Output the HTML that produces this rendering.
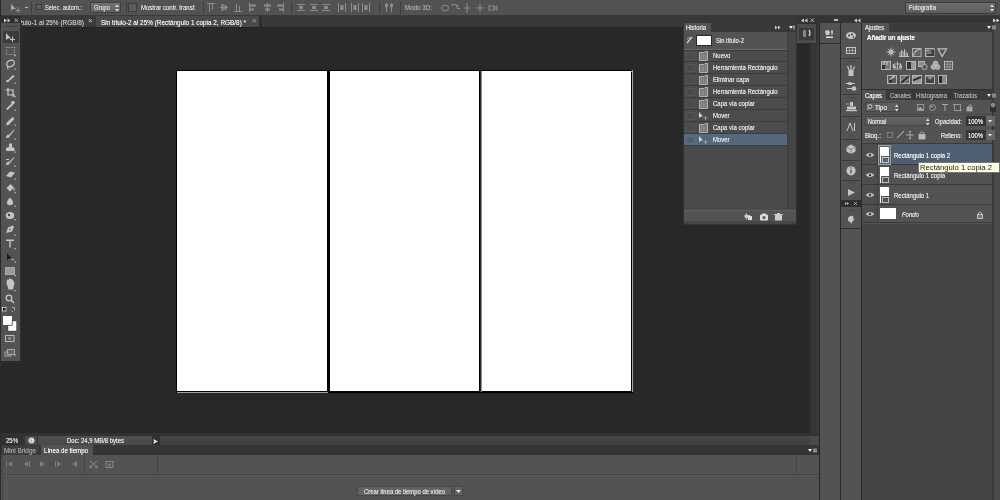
<!DOCTYPE html>
<html><head><meta charset="utf-8">
<style>
*{margin:0;padding:0;box-sizing:border-box}
html,body{width:1000px;height:500px;overflow:hidden;background:#282828;font-family:"Liberation Sans",sans-serif;font-size:6.5px;color:#d8d8d8;position:relative}
.a{position:absolute}
.t{position:absolute;white-space:nowrap;line-height:6.6px;font-size:6.6px;-webkit-font-smoothing:antialiased;filter:grayscale(1);text-shadow:0 0 0.5px currentColor;transform-origin:0 0;transform:scaleX(var(--s,0.9))}
.s{position:absolute;white-space:nowrap;line-height:1;filter:grayscale(1)}
svg{position:absolute;overflow:visible}
</style></head><body>

<!-- ============ OPTIONS BAR ============ -->
<div class="a" style="left:0;top:0;width:1000px;height:16px;background:#525252"></div>
<div class="a" style="left:0;top:15px;width:1000px;height:1px;background:#3a3a3a"></div>
<!-- move tool icon -->
<svg style="left:11px;top:4px" width="10" height="9"><path d="M0 0 L0 7 L2 5 L5 5 Z" fill="#a8a8a8"/><path d="M7 3 V9 M4.5 6.5 H9.5" stroke="#909090" stroke-width="1"/></svg>
<div class="a" style="left:25px;top:7px;width:3px;height:1px;background:#bbb"></div>
<div class="a" style="left:31px;top:2px;width:1px;height:12px;background:#3f3f3f"></div>
<div class="a" style="left:36px;top:4px;width:6px;height:6px;background:#5e5e5e;border:1px solid #3a3a3a"></div>
<div class="t" style="left:45px;top:5px;color:#d8d8d8;--s:0.877">Selec. autom.:</div>
<div class="a" style="left:90px;top:2px;width:31px;height:11px;background:linear-gradient(#727272,#616161);border:1px solid #404040"></div>
<div class="t" style="left:94px;top:5px;color:#d6d6d6;--s:0.874">Grupo</div>
<svg style="left:115px;top:4px" width="4" height="8"><path d="M0 3 L2.0 0.5 L4 3 Z M0 5 L4 5 L2.0 7.5 Z" fill="#ddd"/></svg>
<div class="a" style="left:126px;top:2px;width:1px;height:12px;background:#3f3f3f"></div>
<div class="a" style="left:128px;top:3px;width:9px;height:9px;background:#5c5c5c;border:1px solid #3c3c3c"></div>
<div class="t" style="left:141px;top:5px;color:#d8d8d8;--s:0.909">Mostrar contr. transf.</div>
<div class="a" style="left:203px;top:2px;width:1px;height:12px;background:#3f3f3f"></div>
<!-- align icons -->
<svg style="left:0;top:0" width="520" height="16"><g stroke="#8c8c8c" stroke-width="1" fill="#8c8c8c">
<path d="M207 3.5H215M209.5 4V12M212.5 4V10" fill="none"/>
<path d="M220 7.5H228" fill="none"/><rect x="221.5" y="4" width="2" height="7" stroke="none"/><rect x="224.5" y="5" width="2" height="5" stroke="none"/>
<path d="M234 11.5H242M236.5 4V11M239.5 6V11" fill="none"/>
<path d="M249.5 3V12" fill="none"/><rect x="250" y="4.5" width="6" height="2" stroke="none"/><rect x="250" y="8.5" width="4" height="2" stroke="none"/>
<path d="M267.5 3V12" fill="none"/><rect x="264" y="4.5" width="7" height="2" stroke="none"/><rect x="265" y="8.5" width="5" height="2" stroke="none"/>
<path d="M283.5 3V12" fill="none"/><rect x="277" y="4.5" width="6" height="2" stroke="none"/><rect x="279" y="8.5" width="4" height="2" stroke="none"/>
<path d="M291.5 2V14" stroke="#3e3e3e"/>
<path d="M297 4.5H305M297 10.5H305" fill="none"/><rect x="299" y="6" width="4" height="3" stroke="none"/>
<path d="M310 4.5H318M310 10.5H318" fill="none"/><rect x="312" y="6" width="4" height="3" stroke="none"/>
<path d="M322 4.5H330M322 10.5H330" fill="none"/><rect x="324" y="6" width="4" height="3" stroke="none"/>
<path d="M338.5 3V12M345.5 3V12" fill="none"/><rect x="340.5" y="5" width="3" height="5" stroke="none"/>
<path d="M351.5 3V12M358.5 3V12" fill="none"/><rect x="353.5" y="5" width="3" height="5" stroke="none"/>
<path d="M362.5 3V12M369.5 3V12" fill="none"/><rect x="364.5" y="5" width="3" height="5" stroke="none"/>
<path d="M379.5 2V14" stroke="#3e3e3e"/>
<path d="M386.5 3V12M391.5 3V12" fill="none"/><rect x="385" y="4" width="3" height="3" stroke="none"/><rect x="390" y="4" width="3" height="3" stroke="none"/>
<path d="M400.5 2V14" stroke="#3e3e3e"/>
<g fill="none" stroke="#8c8c8c"><ellipse cx="445" cy="8" rx="3.5" ry="2.8"/><path d="M451 5 Q456 3 459 7 M457 4.5 V8.5 H460" /><path d="M467 3V13 M464 8H470"/><path d="M476 8H484 M480 4V12"/><rect x="489" y="6" width="5" height="4"/><path d="M494 7.5 L497 6 V10 L494 8.5"/></g>
</g></svg>
<div class="t" style="left:405px;top:5px;color:#a4a4a4;--s:0.944">Modo 3D:</div>
<!-- workspace dropdown -->
<div class="a" style="left:905px;top:2px;width:91px;height:12px;background:linear-gradient(#6e6e6e,#5c5c5c);border:1px solid #3c3c3c"></div>
<div class="t" style="left:909px;top:5px;color:#e0e0e0;--s:0.897">Fotografía</div>
<svg style="left:990px;top:4px" width="4" height="8"><path d="M0 3 L2.0 0.5 L4 3 Z M0 5 L4 5 L2.0 7.5 Z" fill="#ddd"/></svg>

<!-- ============ LEFT EDGE ============ -->
<div class="a" style="left:0;top:0;width:1px;height:500px;background:#2b2b2b"></div>

<!-- ============ DOC TAB BAR ============ -->
<div class="a" style="left:1px;top:16px;width:818px;height:11px;background:#383838"></div>
<div class="a" style="left:1px;top:27px;width:818px;height:1px;background:#232323"></div>
<!-- toolbar header -->
<div class="a" style="left:1px;top:16px;width:20px;height:7px;background:#2e2e2e"></div>
<svg style="left:4px;top:18px" width="8" height="5"><path d="M0 0.5 L3 2.5 L0 4.5 Z M3.5 0.5 L6.5 2.5 L3.5 4.5 Z" fill="#ccc"/></svg>
<svg style="left:14px;top:18px" width="5" height="5"><path d="M0.5 0.5 L4 4 M4 0.5 L0.5 4" stroke="#bbb" stroke-width="0.9"/></svg>
<!-- inactive tab -->
<div class="a" style="left:21px;top:16px;width:75px;height:11px;background:#3a3a3a"></div>
<div class="t" style="left:21px;top:20px;color:#bcbcbc;--s:0.977">tulo-1 al 25% (RGB/8)</div>
<div class="s" style="left:88px;top:17px;color:#d0d0d0;font-size:8px">×</div>
<!-- active tab -->
<div class="a" style="left:96px;top:16px;width:163px;height:11px;background:#4a4a4a"></div>
<div class="t" style="left:101px;top:20px;color:#e6e6e6;--s:0.97">Sin título-2 al 25% (Rectángulo 1 copia 2, RGB/8) *</div>
<div class="s" style="left:252px;top:17px;color:#a8a8a8;font-size:8px">×</div>
<div class="a" style="left:259px;top:16px;width:3px;height:11px;background:#2e2e2e"></div>

<!-- ============ CANVAS AREA ============ -->
<div class="a" style="left:22px;top:28px;width:787px;height:405px;background:#282828"></div>
<div class="a" style="left:809px;top:16px;width:10px;height:417px;background:linear-gradient(90deg,#2c2c2c,#363636 30%,#3a3a3a)"></div>

<!-- document -->
<div class="a" style="left:176px;top:70px;width:457px;height:323px;background:#000"></div>
<div class="a" style="left:177px;top:71px;width:150px;height:320px;background:#fff"></div>
<div class="a" style="left:177px;top:392px;width:151px;height:1px;background:#a0a0a0"></div>
<div class="a" style="left:330px;top:71px;width:149px;height:320px;background:#fff"></div>
<div class="a" style="left:480px;top:71px;width:1px;height:321px;background:#2a2a2a"></div><div class="a" style="left:481px;top:71px;width:1px;height:321px;background:#909090"></div><div class="a" style="left:481px;top:71px;width:151px;height:1px;background:#8a8a8a"></div>
<div class="a" style="left:482px;top:71px;width:149px;height:320px;background:#fff"></div>
<div class="a" style="left:632px;top:70px;width:1px;height:322px;background:#a8a8a8"></div>

<!-- ============ TOOLBAR ============ -->
<div class="a" style="left:1px;top:23px;width:19px;height:338px;background:#535353"></div>
<div class="a" style="left:20px;top:23px;width:2px;height:339px;background:#2c2c2c"></div>
<div class="a" style="left:1px;top:362px;width:21px;height:1px;background:#2f2f2f"></div>
<div class="a" style="left:5px;top:26px;width:12px;height:1px;background:#3c3c3c"></div>

<div class="a" style="left:3px;top:31px;width:16px;height:12px;background:#3b3b3b"></div>
<svg style="left:0;top:0" width="22" height="362">
 <g fill="#c4c4c4" stroke="none">
  <!-- move -->
  <path d="M6 33 V40 L8 38.5 L11 38.5 Z"/>
  <path d="M12.5 36.5 V42 M10 39.5 H15" stroke="#c4c4c4" stroke-width="1"/>
  <!-- marquee -->
  <path d="M6 47h1.2v1h-1.2zM8.6 47h1.2v1h-1.2zM11.2 47h1.2v1h-1.2zM13.8 47h1.2v1h-1.2zM6 54h1.2v1h-1.2zM8.6 54h1.2v1h-1.2zM11.2 54h1.2v1h-1.2zM13.8 54h1.2v1h-1.2zM6 49.5h1.2v1h-1.2zM6 52h1.2v1h-1.2zM13.8 49.5h1.2v1h-1.2zM13.8 52h1.2v1h-1.2z" fill="#aaa"/>
  <!-- lasso -->
  <ellipse cx="10.5" cy="63.5" rx="4" ry="3" fill="none" stroke="#c4c4c4" stroke-width="1.3" transform="rotate(-30 10.5 63.5)"/>
  <path d="M7.5 66 L8 69.5" stroke="#c4c4c4" stroke-width="1"/>
  <!-- quick select -->
  <path d="M6.5 81.5 L13 75 L14.5 76.5 L8 82 Z"/><circle cx="7.5" cy="81" r="1.3"/>
  <!-- crop -->
  <path d="M8 88 V95 H15 M5.5 90 H13 V97" fill="none" stroke="#d0d0d0" stroke-width="1.2"/>
  <!-- eyedropper -->
  <path d="M6 109 L12 103 L13.5 104.5 L7.5 110 Z"/><circle cx="13" cy="102.5" r="1.8"/>
  <!-- healing -->
  <path d="M6.5 123 L12 117.5 Q14.5 116.5 14 119.5 L8.5 125 Q5.5 126 6.5 123 Z"/>
  <!-- brush -->
  <path d="M9 135 L14 129.5 L14.5 130 L10 136 Z"/><path d="M6 138 Q6 135 8.5 134.5 L10 136 Q9 138.5 6 138 Z"/>
  <!-- stamp -->
  <path d="M9 143.5 H12 V147 L14.5 148 V151 H6 V148 L9 147 Z"/>
  <!-- history brush -->
  <path d="M9 162 L14 157 L14.5 157.5 L10 163 Z"/><path d="M6 165 Q6 162 8.5 161.5 L10 163 Q9 165.5 6 165 Z"/><path d="M6 159.5 H9" stroke="#c4c4c4"/>
  <!-- eraser -->
  <path d="M6 176 L10 171.5 L15 172.5 L11 177.5 Z"/>
  <!-- bucket -->
  <path d="M6.5 188 L10.5 184 L14 187.5 L10 191.5 Z"/><path d="M13.5 188 Q15 190 14 191" stroke="#c4c4c4" fill="none"/>
  <!-- drop -->
  <path d="M10 197.5 Q14.5 202 12.5 204.5 Q10 206 7.5 204.5 Q5.5 202 10 197.5 Z"/>
  <!-- dodge -->
  <ellipse cx="10" cy="215.5" rx="4.2" ry="3.6"/><circle cx="9" cy="215" r="1.2" fill="#444"/>
  <!-- pen -->
  <path d="M6 233 L8 227.5 L13 225.5 L14 227 L12 231.5 Z"/><circle cx="10" cy="229.5" r="0.8" fill="#555"/>
  <!-- type -->
  <path d="M6 239.5 H14 V241 H10.7 V247.5 H9.3 V241 H6 Z"/>
  <!-- path select -->
  <path d="M7 253 V260 L9 258.5 L12 258.5 Z" fill="#1c1c1c"/><path d="M11 259 L14 260" stroke="#bbb"/>
  <!-- rectangle -->
  <rect x="5.5" y="267.5" width="9" height="7" fill="#9a9a9a"/><rect x="5.5" y="267.5" width="9" height="7" fill="none" stroke="#b8b8b8" stroke-width="0.8"/>
  <!-- hand -->
  <path d="M6.5 283 L7 279.5 L8.5 280 L9 278.5 L10.5 278.8 L11.5 279 L13 280 L14.5 283 L13 289.5 L8.5 289.5 Z"/>
  <!-- zoom -->
  <circle cx="9" cy="298" r="2.8" fill="none" stroke="#c4c4c4" stroke-width="1.3"/><path d="M11 300 L14 303" stroke="#c4c4c4" stroke-width="1.6"/>
 </g>
 <g fill="#d0d0d0">
  <rect x="14.5" y="55" width="1.2" height="1.2"/><rect x="14.5" y="68.5" width="1.2" height="1.2"/><rect x="14.5" y="82.5" width="1.2" height="1.2"/><rect x="14.5" y="96" width="1.2" height="1.2"/>
  <rect x="14.5" y="109.5" width="1.2" height="1.2"/><rect x="14.5" y="124.5" width="1.2" height="1.2"/><rect x="14.5" y="138.5" width="1.2" height="1.2"/><rect x="14.5" y="151.5" width="1.2" height="1.2"/>
  <rect x="14.5" y="165.5" width="1.2" height="1.2"/><rect x="14.5" y="178.5" width="1.2" height="1.2"/><rect x="14.5" y="192" width="1.2" height="1.2"/><rect x="14.5" y="205.5" width="1.2" height="1.2"/>
  <rect x="14.5" y="219" width="1.2" height="1.2"/><rect x="14.5" y="234.5" width="1.2" height="1.2"/><rect x="14.5" y="248" width="1.2" height="1.2"/><rect x="14.5" y="261.5" width="1.2" height="1.2"/>
  <rect x="14.5" y="275" width="1.2" height="1.2"/><rect x="14.5" y="290" width="1.2" height="1.2"/><rect x="14.5" y="354.5" width="1.2" height="1.2"/>
 </g>
 <!-- colors -->
 <rect x="2.5" y="307.5" width="3.5" height="3.5" fill="#111" stroke="#ddd" stroke-width="0.8"/>
 <path d="M12 307.5 H14.5 V310.5 M11.5 311 L13 312" fill="none" stroke="#bbb" stroke-width="0.8"/>
 <rect x="8" y="321" width="8.5" height="10" fill="#fff"/>
 <rect x="8" y="321" width="8.5" height="10" fill="none" stroke="#333" stroke-width="0.4"/>
 <rect x="3" y="316" width="9" height="9" fill="#fff"/><path d="M12.3 320.5 V325.3 H8" fill="none" stroke="#2e2e2e" stroke-width="0.7"/>
 <rect x="5.5" y="335.5" width="8.5" height="6" fill="none" stroke="#bbb" stroke-width="1"/><circle cx="9.75" cy="338.5" r="1.8" fill="#888"/>
 <rect x="5" y="352" width="6" height="4" fill="none" stroke="#bbb" stroke-width="0.8"/><rect x="7.5" y="349.5" width="7" height="5" fill="#666" stroke="#bbb" stroke-width="0.8"/>
</svg>

<!-- ============ STATUS BAR ============ -->
<div class="a" style="left:1px;top:433px;width:818px;height:12px;background:#313131"></div>
<div class="a" style="left:160px;top:436px;width:650px;height:9px;background:linear-gradient(#474747,#3f3f3f)"></div>
<div class="t" style="left:6px;top:438px;color:#dcdcdc;--s:0.909">25%</div>
<div class="a" style="left:25px;top:436px;width:12px;height:9px;background:#4a4a4a"></div>
<svg style="left:28px;top:437px" width="8" height="8"><circle cx="3.5" cy="3.5" r="3" fill="#dadada"/><path d="M2 2.5 L4 3.5 L3 5.5" stroke="#8a8a8a" fill="none" stroke-width="0.7"/></svg>
<div class="a" style="left:38px;top:436px;width:114px;height:9px;background:linear-gradient(#505050,#484848)"></div>
<div class="t" style="left:67px;top:438px;color:#e0e0e0;--s:0.905">Doc: 24,9 MB/8 bytes</div>
<svg style="left:153px;top:439px" width="6" height="6"><path d="M0 0 L5 2.5 L0 5 L1.2 2.5 Z" fill="#e8e8e8"/></svg>
<div class="a" style="left:810px;top:436px;width:9px;height:9px;background:#4a4a4a"></div>

<!-- ============ TIMELINE ============ -->
<div class="a" style="left:1px;top:445px;width:818px;height:10px;background:#353535"></div>
<div class="a" style="left:2px;top:446px;width:37px;height:9px;background:#3e3e3e"></div>
<div class="t" style="left:4px;top:448px;color:#9c9c9c;--s:0.97">Mini Bridge</div>
<div class="a" style="left:41px;top:445px;width:52px;height:10px;background:#535353"></div>
<div class="t" style="left:44px;top:448px;color:#ececec;--s:0.93">Línea de tiempo</div>
<svg style="left:808px;top:448px" width="10" height="6"><path d="M0 1 L4 1 L2 4 Z" fill="#eee"/><rect x="5" y="0.5" width="4" height="4" fill="#888"/></svg>
<div class="a" style="left:1px;top:455px;width:818px;height:45px;background:#535353"></div>
<div class="a" style="left:2px;top:455px;width:1px;height:45px;background:#474747"></div>
<div class="a" style="left:1px;top:474px;width:818px;height:1px;background:#444"></div>
<div class="a" style="left:1px;top:475px;width:818px;height:1px;background:#585858"></div>
<div class="a" style="left:1px;top:477px;width:818px;height:1px;background:#4e4e4e"></div>
<div class="a" style="left:6px;top:455px;width:1px;height:45px;background:#5a5a5a"></div>
<div class="a" style="left:84px;top:456px;width:1px;height:17px;background:#464646"></div>
<div class="a" style="left:157px;top:456px;width:1px;height:17px;background:#404040"></div>
<div class="a" style="left:796px;top:456px;width:1px;height:17px;background:#444"></div>
<svg style="left:0;top:459px" width="160" height="12">
 <g fill="#7c7c7c">
  <rect x="6" y="2" width="1" height="6"/><path d="M12 2 L8 5 L12 8 Z"/>
  <path d="M28 2 L24 5 L28 8 Z"/><rect x="29" y="2" width="1" height="6"/>
  <path d="M40 2 L45 5 L40 8 Z"/>
  <rect x="55" y="2" width="1" height="6"/><path d="M57 2 L61 5 L57 8 Z"/>
  <path d="M77 2 L72 5 L77 8 Z"/>
 </g>
 <g stroke="#888" fill="none" stroke-width="1">
  <path d="M90 2 L97 8 M97 2 L90 8"/><circle cx="90.5" cy="8" r="1"/><circle cx="96.5" cy="8" r="1"/>
  <rect x="106" y="2.5" width="7" height="6"/><rect x="108" y="4.5" width="3" height="3" fill="#777" stroke="none"/>
 </g>
</svg>
<div class="a" style="left:357px;top:486px;width:95px;height:10px;background:#626262;border:1px solid #484848"></div>
<div class="t" style="left:364px;top:489px;color:#dcdcdc;--s:0.895">Crear línea de tiempo de vídeo</div>
<div class="a" style="left:454px;top:486px;width:9px;height:10px;background:#626262;border:1px solid #484848"></div>
<svg style="left:456px;top:490px" width="5" height="3"><path d="M0 0 H5 L2.5 3 Z" fill="#eee"/></svg>


<!-- ============ RIGHT COLUMNS ============ -->
<div class="a" style="left:819px;top:16px;width:1px;height:484px;background:#262626"></div>
<div class="a" style="left:820px;top:16px;width:20px;height:484px;background:#535353"></div>
<div class="a" style="left:840px;top:16px;width:1px;height:484px;background:#2a2a2a"></div>
<div class="a" style="left:841px;top:16px;width:20px;height:484px;background:#535353"></div>
<div class="a" style="left:861px;top:16px;width:1px;height:484px;background:#2a2a2a"></div>
<div class="a" style="left:862px;top:16px;width:130px;height:484px;background:#454545"></div>
<div class="a" style="left:992px;top:16px;width:2px;height:484px;background:#3a3a3a"></div>
<div class="a" style="left:994px;top:16px;width:6px;height:484px;background:#4a4a4a"></div>
<!-- column headers -->
<div class="a" style="left:797px;top:16px;width:203px;height:7px;background:#353535"></div>
<svg style="left:801px;top:18px" width="8" height="5"><path d="M3 0.5 L0 2.5 L3 4.5 Z M6.5 0.5 L3.5 2.5 L6.5 4.5 Z" fill="#ccc"/></svg>
<svg style="left:810px;top:18px" width="5" height="5"><path d="M0.5 0.5 L4 4 M4 0.5 L0.5 4" stroke="#bbb" stroke-width="0.9"/></svg>
<div class="a" style="left:834px;top:19px;width:4px;height:2px;background:#bbb"></div>
<svg style="left:854px;top:18px" width="8" height="5"><path d="M3 0.5 L0 2.5 L3 4.5 Z M6.5 0.5 L3.5 2.5 L6.5 4.5 Z" fill="#ccc"/></svg>
<svg style="left:993px;top:18px" width="8" height="5"><path d="M0 0.5 L3 2.5 L0 4.5 Z M3.5 0.5 L6.5 2.5 L3.5 4.5 Z" fill="#ddd"/></svg>

<!-- panel A (floating collapsed) -->
<div class="a" style="left:796px;top:23px;width:21px;height:21px;background:#4c4c4c;border:1px solid #2e2e2e"></div>
<div class="a" style="left:799px;top:28px;width:15px;height:12px;background:#3a3a3a"></div>
<svg style="left:801px;top:29px" width="12" height="10"><rect x="2" y="1" width="3" height="7" rx="1" fill="#888"/><path d="M8 1 Q10 4 8 7" stroke="#ddd" fill="none" stroke-width="1.2"/></svg>
<div class="a" style="left:797px;top:44px;width:12px;height:389px;background:#282828"></div>

<!-- panel B -->
<div class="a" style="left:820px;top:23px;width:20px;height:21px;background:#535353;border-bottom:1px solid #2e2e2e"></div>
<svg style="left:824px;top:29px" width="12" height="10"><path d="M1 2 L4 1 L6 3 L5 6 L2 6 Z" fill="#ccc"/><path d="M8 1 V6 M7 3 H9" stroke="#ddd"/><rect x="2" y="7.5" width="7" height="1.5" fill="#ddd"/></svg>

<!-- panel C icons -->
<svg style="left:841px;top:23px" width="20" height="210">
 <g fill="#c4c4c4">
  <ellipse cx="10" cy="12.5" rx="5" ry="3.5"/><circle cx="8" cy="12.5" r="0.9" fill="#333"/><circle cx="11" cy="11.5" r="0.9" fill="#333"/><circle cx="12.5" cy="14" r="0.7" fill="#333"/>
  <rect x="5.5" y="24.5" width="9" height="6" fill="none" stroke="#c4c4c4"/><path d="M5.5 27.5 H14.5 M8.5 24.5 V30.5 M11.5 24.5 V30.5" stroke="#c4c4c4" stroke-width="0.6"/>
 </g>
 <path d="M1 35.5 H19" stroke="#3a3a3a"/><path d="M6 38.5 H14" stroke="#474747"/>
 <g fill="#c4c4c4">
  <rect x="7.5" y="47" width="5" height="6"/>
  <path d="M8 47 L6.5 43 M10 47 L10 42 M12 47 L13.5 43.5" stroke="#c4c4c4" stroke-width="1.2" fill="none"/>
  <path d="M5 60.5 H14" stroke="#c4c4c4" stroke-width="1"/><ellipse cx="9" cy="60.5" rx="2.5" ry="1.5"/>
  <path d="M6 65.5 H12" stroke="#c4c4c4" stroke-width="1"/><circle cx="13" cy="65.5" r="2.3"/>
 </g>
 <path d="M1 71.5 H19" stroke="#3a3a3a"/><path d="M6 74.5 H14" stroke="#474747"/>
 <g fill="#c4c4c4"><rect x="9" y="79" width="3" height="4"/><rect x="6" y="83.5" width="9" height="3"/><rect x="5" y="87" width="11" height="1.2"/><path d="M5 81 H8" stroke="#aaa"/></g>
 <path d="M1 93.5 H19" stroke="#3a3a3a"/><path d="M6 96 H14" stroke="#474747"/>
 <path d="M6 108 L9 100 L12 108 M13.5 100 V108" stroke="#c8c8c8" fill="none" stroke-width="1"/>
 <path d="M1 116.5 H19" stroke="#3a3a3a"/><path d="M6 119 H14" stroke="#474747"/>
 <path d="M10 121.5 L14.5 124 L14.5 128.5 L10 131 L5.5 128.5 L5.5 124 Z" fill="#c4c4c4"/><path d="M5.5 124 L10 126.5 L14.5 124 M10 126.5 V131" stroke="#666" fill="none" stroke-width="0.7"/>
 <path d="M1 137.5 H19" stroke="#3a3a3a"/><path d="M6 140 H14" stroke="#474747"/>
 <circle cx="10" cy="147.8" r="4.6" fill="#c4c4c4"/><rect x="9.4" y="146.5" width="1.2" height="4" fill="#444"/><rect x="9.4" y="144.3" width="1.2" height="1.2" fill="#444"/>
 <path d="M1 157.5 H19" stroke="#3a3a3a"/><path d="M6 160 H14" stroke="#474747"/>
 <path d="M7 166 L14 169.5 L7 173 Z" fill="#c4c4c4"/>
 <rect x="0" y="177" width="20" height="7" fill="#2e2e2e"/>
 <path d="M4 179 L6 180.5 L4 182 Z M6 179 L8 180.5 L6 182 Z" fill="#bbb"/><path d="M13 179 L16 182 M16 179 L13 182" stroke="#bbb" stroke-width="0.8"/>
 <path d="M6 187.5 H14" stroke="#474747"/>
 <path d="M7 195 Q9 192 12 193 L13 197 L11 199 V201 L9 199 L7 198 Z" fill="#c4c4c4"/>
 <path d="M0 205.5 H20" stroke="#2e2e2e"/>
</svg>

<!-- ============ AJUSTES PANEL ============ -->
<div class="a" style="left:862px;top:23px;width:130px;height:9px;background:#3b3b3b"></div>
<div class="a" style="left:862px;top:23px;width:27px;height:9px;background:#535353"></div>
<div class="t" style="left:865px;top:25px;color:#e0e0e0;--s:0.88">Ajustes</div>
<svg style="left:987px;top:25px" width="10" height="6"><path d="M0 1 L4 1 L2 4 Z" fill="#eee"/><rect x="5" y="0.5" width="4" height="4" fill="#888"/></svg>
<div class="a" style="left:862px;top:32px;width:130px;height:57px;background:#535353"></div>
<div class="t" style="left:867px;top:35px;color:#f0f0f0;font-weight:bold;--s:0.928">Añadir un ajuste</div>
<svg style="left:862px;top:32px" width="130" height="57">
 <g stroke="#bdbdbd" stroke-width="0.9" fill="none">
  <!-- row1 -->
  <circle cx="29" cy="20" r="2.3" fill="#bdbdbd"/><path d="M29 15.5V17M29 23V24.5M24.5 20H26M32 20H33.5M25.8 16.8L26.8 17.8M31.2 22.2L32.2 23.2M25.8 23.2L26.8 22.2M31.2 17.8L32.2 16.8"/>
  <path d="M37 24.5H47M38 24V20M39.5 24V18M41 24V19M42.5 24V17M44 24V19.5M45.5 24V21" stroke-width="1"/>
  <rect x="50.5" y="16.5" width="8.5" height="8" fill="#5e5e5e"/><path d="M53.3 16.5V24.5M56.2 16.5V24.5M50.5 19.3H59M50.5 22H59" stroke="#777" stroke-width="0.5"/><path d="M51 24 Q53 18 58.5 17" stroke-width="1.1"/>
  <rect x="63.5" y="16.5" width="8.5" height="8" fill="#6a6a6a"/><path d="M64 24 L72 17 L72 24 Z" fill="#3a3a3a" stroke="none"/><path d="M64.5 18.5H67M66.5 21H70" stroke="#ddd" stroke-width="0.7"/>
  <path d="M76 16.8 H84.5 L80.2 24.5 Z" stroke-width="1.3"/>
  <!-- row2 -->
  <rect x="19.5" y="29.5" width="9" height="8" fill="#7a7a7a"/><rect x="20" y="33" width="3" height="4" fill="#333" stroke="none"/><path d="M22 30V33M25 30V33" stroke="#ddd"/>
  <path d="M31 37H40M35.5 29.5V37M32 32H39" /><path d="M31.5 32L31 35.5H34ZM38.5 32L37.5 35.5H40Z" fill="#bdbdbd"/>
  <rect x="44.5" y="29.5" width="9" height="8" fill="#9a9a9a"/><rect x="45" y="30" width="4" height="7" fill="#333" stroke="none"/>
  <rect x="56.5" y="29.5" width="6" height="5" fill="#888"/><circle cx="62.5" cy="35" r="2.6" fill="#555"/>
  <circle cx="73.5" cy="31.5" r="2.4" fill="#aaa"/><circle cx="71.5" cy="35" r="2.4" fill="#aaa"/><circle cx="75.5" cy="35" r="2.4" fill="#aaa"/>
  <rect x="82.5" y="29.5" width="8" height="8" fill="#555"/><path d="M82.5 32.2H90.5M82.5 34.8H90.5M85.2 29.5V37.5M87.8 29.5V37.5" stroke-width="0.6"/>
  <!-- row3 -->
  <rect x="25.5" y="43.5" width="9" height="8" fill="#5a5a5a"/><path d="M27 50 Q29 45 33 44.5" stroke-width="1.3"/><circle cx="28.5" cy="49" r="1.5" fill="#222" stroke="none"/>
  <rect x="38.5" y="43.5" width="9" height="8" fill="#6a6a6a"/><path d="M39 51 L47 44" stroke="#2a2a2a" stroke-width="1.6"/><path d="M39 48 L44 44M42 51 L47 47" stroke="#999" stroke-width="0.8"/>
  <rect x="50.5" y="43.5" width="9" height="8" fill="#999"/><path d="M51 48.5 L59 45" stroke="#1e1e1e" stroke-width="1.8"/>
  <rect x="63.5" y="43.5" width="9" height="8" fill="#8a8a8a"/><path d="M64 44 L68 48 L72 44 L72 51 L64 51 Z" fill="#444" stroke="none"/>
  <rect x="76.5" y="43.5" width="8" height="8" fill="#8a8a8a"/><rect x="77" y="44" width="3" height="7" fill="#2a2a2a" stroke="none"/>
 </g>
</svg>
<div class="a" style="left:862px;top:89px;width:130px;height:1px;background:#2e2e2e"></div>

<!-- ============ CAPAS PANEL ============ -->
<div class="a" style="left:862px;top:90px;width:130px;height:10px;background:#3b3b3b"></div>
<div class="a" style="left:862px;top:90px;width:24px;height:10px;background:#535353"></div>
<div class="t" style="left:865px;top:93px;color:#ececec;--s:0.89">Capas</div>
<div class="t" style="left:890px;top:93px;color:#a8a8a8;--s:0.868">Canales</div>
<div class="a" style="left:913px;top:91px;width:1px;height:8px;background:#333"></div>
<div class="t" style="left:916px;top:93px;color:#a8a8a8;--s:0.92">Histograma</div>
<div class="a" style="left:950px;top:91px;width:1px;height:8px;background:#333"></div>
<div class="t" style="left:954px;top:93px;color:#a8a8a8;--s:0.846">Trazados</div>
<svg style="left:987px;top:93px" width="10" height="6"><path d="M0 1 L4 1 L2 4 Z" fill="#eee"/><rect x="5" y="0.5" width="4" height="4" fill="#888"/></svg>
<div class="a" style="left:862px;top:100px;width:130px;height:44px;background:#535353"></div>
<!-- filter row -->
<div class="a" style="left:865px;top:102px;width:35px;height:10px;background:#5e5e5e;border:1px solid #464646"></div>
<svg style="left:867px;top:104px" width="6" height="6"><circle cx="3" cy="2.5" r="2" fill="none" stroke="#ddd" stroke-width="0.8"/><path d="M1.5 4 L0.5 5.5" stroke="#ddd" stroke-width="0.8"/></svg>
<div class="t" style="left:875px;top:105px;color:#e0e0e0;--s:0.95">Tipo</div>
<svg style="left:895px;top:104px" width="3.5" height="8"><path d="M0 3 L1.75 0.5 L3.5 3 Z M0 5 L3.5 5 L1.75 7.5 Z" fill="#ddd"/></svg>
<svg style="left:915px;top:103px" width="80" height="10">
 <g stroke="#a8a8a8" fill="none" stroke-width="0.8">
  <rect x="2.5" y="1.5" width="6" height="6"/><path d="M3 7 L5 4 L8 7" fill="#a8a8a8"/>
  <circle cx="17.5" cy="4.5" r="3"/><path d="M15 3 L18 4" stroke-width="1.2"/>
  <path d="M27 1.5 H33 M30 1.5 V8" stroke-width="1"/>
  <rect x="39.5" y="1.5" width="6" height="6"/><path d="M38 1.5H40M45 7.5H47" />
  <rect x="52" y="4" width="5" height="4" fill="#a8a8a8"/><path d="M53 4 Q55 0 57 3" />
 </g>
 <rect x="75" y="-1" width="6" height="10" rx="2" fill="#2e2e2e"/><rect x="75.8" y="-0.2" width="4.4" height="4.4" rx="1.5" fill="#8a8a8a"/>
</svg>
<div class="a" style="left:862px;top:114px;width:130px;height:1px;background:#4a4a4a"></div>
<!-- blend row -->
<div class="a" style="left:865px;top:116px;width:66px;height:10px;background:linear-gradient(#666,#5a5a5a);border:1px solid #474747"></div>
<div class="t" style="left:868px;top:119px;color:#e0e0e0;--s:0.849">Normal</div>
<svg style="left:926px;top:118px" width="3.5" height="8"><path d="M0 3 L1.75 0.5 L3.5 3 Z M0 5 L3.5 5 L1.75 7.5 Z" fill="#ddd"/></svg>
<div class="t" style="left:935px;top:119px;color:#e0e0e0;--s:0.897">Opacidad:</div>
<div class="a" style="left:966px;top:116px;width:20px;height:10px;background:#353535"></div>
<div class="t" style="left:968px;top:119px;color:#f0f0f0;--s:0.888">100%</div>
<div class="a" style="left:986px;top:116px;width:9px;height:10px;background:#666"></div>
<svg style="left:988px;top:120px" width="5" height="3"><path d="M0 0H4L2 2.5Z" fill="#eee"/></svg>
<!-- lock row -->
<div class="t" style="left:865px;top:133px;color:#e0e0e0;--s:0.947">Bloq.:</div>
<svg style="left:884px;top:130px" width="50" height="10">
 <g stroke="#bbb" fill="none" stroke-width="0.8">
  <rect x="3.5" y="2.5" width="5" height="5" stroke-dasharray="1 1"/>
  <path d="M13 8 L20 1" stroke-width="1.2" stroke="#999"/>
  <path d="M26 1V9M22 5H30M25 2L26 1L27 2M25 8L26 9L27 8" />
  <rect x="35" y="4.5" width="6" height="4.5" fill="#bbb"/><path d="M36 4.5 V3 Q38 0.5 40 3 V4.5"/>
 </g>
</svg>
<div class="t" style="left:941px;top:133px;color:#e0e0e0;--s:0.868">Relleno:</div>
<div class="a" style="left:966px;top:130px;width:20px;height:10px;background:#353535"></div>
<div class="t" style="left:968px;top:133px;color:#f0f0f0;--s:0.888">100%</div>
<div class="a" style="left:986px;top:130px;width:9px;height:10px;background:#666"></div>
<svg style="left:988px;top:134px" width="5" height="3"><path d="M0 0H4L2 2.5Z" fill="#eee"/></svg>
<div class="a" style="left:862px;top:143px;width:130px;height:1px;background:#3c3c3c"></div>

<!-- layers -->
<div class="a" style="left:862px;top:144px;width:130px;height:80px;background:#535353"></div>
<div class="a" style="left:862px;top:144px;width:15px;height:78px;background:#4e4e4e"></div>
<div class="a" style="left:877px;top:144px;width:1px;height:78px;background:#3e3e3e"></div>
<div class="a" style="left:891px;top:144px;width:101px;height:21px;background:#4f5f73"></div>
<div class="a" style="left:862px;top:164px;width:130px;height:1px;background:#3a3a3a"></div>
<div class="a" style="left:862px;top:184px;width:130px;height:1px;background:#3a3a3a"></div>
<div class="a" style="left:862px;top:204px;width:130px;height:1px;background:#3a3a3a"></div>
<div class="a" style="left:862px;top:222px;width:130px;height:1px;background:#3a3a3a"></div>
<svg style="left:865px;top:151px" width="10" height="70">
 <g fill="#c8c8c8" stroke="#c8c8c8" stroke-width="0.6">
  <path d="M1 4 Q5 0.5 9 4 Q5 7.5 1 4 Z"/><path d="M1 24 Q5 20.5 9 24 Q5 27.5 1 24 Z"/>
  <path d="M1 44 Q5 40.5 9 44 Q5 47.5 1 44 Z"/><path d="M1 63 Q5 59.5 9 63 Q5 66.5 1 63 Z"/>
 </g>
 <g fill="#3a3a3a"><circle cx="5" cy="4" r="1.2"/><circle cx="5" cy="24" r="1.2"/><circle cx="5" cy="44" r="1.2"/><circle cx="5" cy="63" r="1.2"/></g>
</svg>
<!-- thumbnails -->
<div class="a" style="left:878px;top:145px;width:13px;height:20px;border:1px solid #9aa2aa;background:#56626e"></div>
<div class="a" style="left:880px;top:147px;width:9px;height:9px;background:#fff"></div>
<div class="a" style="left:880px;top:156px;width:1px;height:7px;background:#fff"></div>
<div class="a" style="left:882px;top:157px;width:7px;height:6px;border:1px solid #c0c8d0;background:#56657a"></div>

<div class="a" style="left:880px;top:167px;width:9px;height:9px;background:#fff"></div>
<div class="a" style="left:880px;top:176px;width:1px;height:7px;background:#fff"></div>
<div class="a" style="left:882px;top:177px;width:7px;height:6px;border:1px solid #bbb"></div>

<div class="a" style="left:880px;top:187px;width:9px;height:9px;background:#fff"></div>
<div class="a" style="left:880px;top:196px;width:1px;height:7px;background:#fff"></div>
<div class="a" style="left:882px;top:197px;width:7px;height:6px;border:1px solid #bbb"></div>

<div class="a" style="left:880px;top:208px;width:16px;height:11px;background:#fff"></div>

<div class="t" style="left:894px;top:153px;color:#e8ecf0;--s:0.905">Rectángulo 1 copia 2</div>
<div class="t" style="left:894px;top:173px;color:#e0e0e0;--s:0.905">Rectángulo 1 copia</div>
<div class="t" style="left:894px;top:193px;color:#e0e0e0;--s:0.905">Rectángulo 1</div>
<div class="t" style="left:902px;top:212px;color:#e0e0e0;font-style:italic;--s:0.9">Fondo</div>
<svg style="left:976px;top:210px" width="8" height="9"><rect x="1.5" y="4.5" width="5" height="4" fill="#777" stroke="#ccc" stroke-width="0.9"/><path d="M2.5 4.5 V3 Q4 0.5 5.5 3 V4.5" fill="none" stroke="#ccc" stroke-width="0.9"/></svg>

<!-- tooltip -->
<div class="a" style="left:918px;top:162px;width:82px;height:11px;background:#ffffe1;border:1px solid #767676"></div>
<div class="t" style="left:920px;top:164px;color:#202018;font-size:8px;line-height:8px;--s:0.958;text-shadow:none">Rectángulo 1 copia 2</div>

<!-- ============ HISTORY PANEL ============ -->
<div class="a" style="left:683px;top:23px;width:114px;height:202px;background:#4a4a4a;border:1px solid #333"></div>
<div class="a" style="left:684px;top:23px;width:112px;height:9px;background:#393939"></div>
<div class="a" style="left:684px;top:23px;width:27px;height:9px;background:#535353"></div>
<div class="t" style="left:686px;top:25px;color:#e0e0e0;--s:0.893">Historia</div>
<svg style="left:775px;top:25px" width="20" height="6"><path d="M0 0.5 L2.5 2.5 L0 4.5Z M3 0.5 L5.5 2.5 L3 4.5Z" fill="#ccc"/><path d="M14 1 L18 1 L16 4 Z" fill="#eee"/><rect x="18" y="0.5" width="2" height="4" fill="#888"/></svg>
<div class="a" style="left:684px;top:32px;width:103px;height:178px;background:#4a4a4a"></div>
<div class="a" style="left:787px;top:32px;width:9px;height:178px;background:#454545;border-left:1px solid #3e3e3e"></div>
<!-- snapshot row -->
<div class="a" style="left:684px;top:32px;width:103px;height:17px;background:#535353"></div>
<svg style="left:686px;top:36px" width="8" height="8"><path d="M1 7 L6 1" stroke="#ccc" stroke-width="1.3"/><path d="M1 3 Q3 1 5 2" stroke="#ccc" fill="none" stroke-width="0.8"/></svg>
<div class="a" style="left:696px;top:35px;width:16px;height:11px;background:#fff;border:1px solid #2a2a2a"></div>
<div class="t" style="left:716px;top:38px;color:#e0e0e0;--s:0.889">Sin título-2</div>
<div class="a" style="left:684px;top:49px;width:103px;height:1px;background:#6a6a6a"></div>
<div class="a" style="left:684px;top:50px;width:103px;height:1px;background:#3a3a3a"></div>
<div class="a" style="left:684px;top:51px;width:103px;height:10px;background:#4c4c4c"></div>
<div class="a" style="left:684px;top:61px;width:103px;height:1px;background:#3c3c3c"></div>
<div class="a" style="left:686px;top:52px;width:9px;height:8px;background:#4a4a4a;border:1px solid #555"></div>
<svg style="left:699px;top:51px" width="9" height="10"><path d="M0.5 1.5 H5 L6 0.5 H8.5 V9.5 H0.5 Z" fill="#7a7a7a" stroke="#b4b4b4" stroke-width="1"/><path d="M2.5 3.5 V8 M4.5 3.5 V8 M6.5 3.5 V8" stroke="#9a9a9a" stroke-width="0.6"/></svg>
<div class="t" style="left:713px;top:53px;color:#e0e0e0;--s:0.905">Nuevo</div>
<div class="a" style="left:684px;top:62px;width:103px;height:11px;background:#4c4c4c"></div>
<div class="a" style="left:684px;top:73px;width:103px;height:1px;background:#3c3c3c"></div>
<div class="a" style="left:686px;top:64px;width:9px;height:8px;background:#4a4a4a;border:1px solid #555"></div>
<svg style="left:699px;top:63px" width="9" height="10"><path d="M0.5 1.5 H5 L6 0.5 H8.5 V9.5 H0.5 Z" fill="#7a7a7a" stroke="#b4b4b4" stroke-width="1"/><path d="M2.5 3.5 V8 M4.5 3.5 V8 M6.5 3.5 V8" stroke="#9a9a9a" stroke-width="0.6"/></svg>
<div class="t" style="left:713px;top:65px;color:#e0e0e0;--s:0.905">Herramienta Rectángulo</div>
<div class="a" style="left:684px;top:74px;width:103px;height:11px;background:#4c4c4c"></div>
<div class="a" style="left:684px;top:85px;width:103px;height:1px;background:#3c3c3c"></div>
<div class="a" style="left:686px;top:76px;width:9px;height:8px;background:#4a4a4a;border:1px solid #555"></div>
<svg style="left:699px;top:75px" width="9" height="10"><path d="M0.5 1.5 H5 L6 0.5 H8.5 V9.5 H0.5 Z" fill="#7a7a7a" stroke="#b4b4b4" stroke-width="1"/><path d="M2.5 3.5 V8 M4.5 3.5 V8 M6.5 3.5 V8" stroke="#9a9a9a" stroke-width="0.6"/></svg>
<div class="t" style="left:713px;top:77px;color:#e0e0e0;--s:0.905">Eliminar capa</div>
<div class="a" style="left:684px;top:86px;width:103px;height:11px;background:#4c4c4c"></div>
<div class="a" style="left:684px;top:97px;width:103px;height:1px;background:#3c3c3c"></div>
<div class="a" style="left:686px;top:88px;width:9px;height:8px;background:#4a4a4a;border:1px solid #555"></div>
<svg style="left:699px;top:87px" width="9" height="10"><path d="M0.5 1.5 H5 L6 0.5 H8.5 V9.5 H0.5 Z" fill="#7a7a7a" stroke="#b4b4b4" stroke-width="1"/><path d="M2.5 3.5 V8 M4.5 3.5 V8 M6.5 3.5 V8" stroke="#9a9a9a" stroke-width="0.6"/></svg>
<div class="t" style="left:713px;top:89px;color:#e0e0e0;--s:0.905">Herramienta Rectángulo</div>
<div class="a" style="left:684px;top:98px;width:103px;height:11px;background:#4c4c4c"></div>
<div class="a" style="left:684px;top:109px;width:103px;height:1px;background:#3c3c3c"></div>
<div class="a" style="left:686px;top:100px;width:9px;height:8px;background:#4a4a4a;border:1px solid #555"></div>
<svg style="left:699px;top:99px" width="9" height="10"><path d="M0.5 1.5 H5 L6 0.5 H8.5 V9.5 H0.5 Z" fill="#7a7a7a" stroke="#b4b4b4" stroke-width="1"/><path d="M2.5 3.5 V8 M4.5 3.5 V8 M6.5 3.5 V8" stroke="#9a9a9a" stroke-width="0.6"/></svg>
<div class="t" style="left:713px;top:101px;color:#e0e0e0;--s:0.905">Capa vía copiar</div>
<div class="a" style="left:684px;top:110px;width:103px;height:11px;background:#4c4c4c"></div>
<div class="a" style="left:684px;top:121px;width:103px;height:1px;background:#3c3c3c"></div>
<div class="a" style="left:686px;top:112px;width:9px;height:8px;background:#4a4a4a;border:1px solid #555"></div>
<svg style="left:699px;top:112px" width="10" height="8"><path d="M0 0 V6 L2 4.5 L4 4.5 Z" fill="#d8d8d8"/><path d="M6.5 4 V8 M4.5 6 H8.5" stroke="#aaa" stroke-width="0.8"/></svg>
<div class="t" style="left:713px;top:113px;color:#e0e0e0;--s:0.905">Mover</div>
<div class="a" style="left:684px;top:122px;width:103px;height:11px;background:#4c4c4c"></div>
<div class="a" style="left:684px;top:133px;width:103px;height:1px;background:#3c3c3c"></div>
<div class="a" style="left:686px;top:124px;width:9px;height:8px;background:#4a4a4a;border:1px solid #555"></div>
<svg style="left:699px;top:123px" width="9" height="10"><path d="M0.5 1.5 H5 L6 0.5 H8.5 V9.5 H0.5 Z" fill="#7a7a7a" stroke="#b4b4b4" stroke-width="1"/><path d="M2.5 3.5 V8 M4.5 3.5 V8 M6.5 3.5 V8" stroke="#9a9a9a" stroke-width="0.6"/></svg>
<div class="t" style="left:713px;top:125px;color:#e0e0e0;--s:0.905">Capa vía copiar</div>
<div class="a" style="left:684px;top:134px;width:103px;height:11px;background:#57687b"></div>
<div class="a" style="left:684px;top:145px;width:103px;height:1px;background:#3c3c3c"></div>
<div class="a" style="left:686px;top:136px;width:9px;height:8px;background:#52606e;border:1px solid #607080"></div>
<svg style="left:699px;top:136px" width="10" height="8"><path d="M0 0 V6 L2 4.5 L4 4.5 Z" fill="#d8d8d8"/><path d="M6.5 4 V8 M4.5 6 H8.5" stroke="#aaa" stroke-width="0.8"/></svg>
<div class="t" style="left:713px;top:137px;color:#e0e0e0;--s:0.905">Mover</div>
<!-- history footer -->
<div class="a" style="left:684px;top:210px;width:112px;height:1px;background:#5e5e5e"></div>
<div class="a" style="left:684px;top:211px;width:112px;height:10px;background:#535353"></div>
<div class="a" style="left:684px;top:221px;width:112px;height:3px;background:#474747"></div>
<svg style="left:743px;top:212px" width="45" height="9">
 <path d="M1 4 L4 1 L4 3 H7 V6 H4 V8 Z" fill="#ccc" transform="translate(0,0)"/><rect x="5" y="4" width="4" height="4" fill="#ddd"/>
 <rect x="17" y="2.5" width="8" height="6" rx="1" fill="#ddd"/><circle cx="21" cy="5.5" r="1.6" fill="#555"/><rect x="19" y="1.5" width="4" height="1.5" fill="#ddd"/>
 <rect x="32" y="3" width="7" height="5.5" rx="0.5" fill="#ccc"/><rect x="31" y="2" width="9" height="1" fill="#ccc"/><rect x="34" y="1" width="3" height="1" fill="#ccc"/>
</svg>

</body></html>
